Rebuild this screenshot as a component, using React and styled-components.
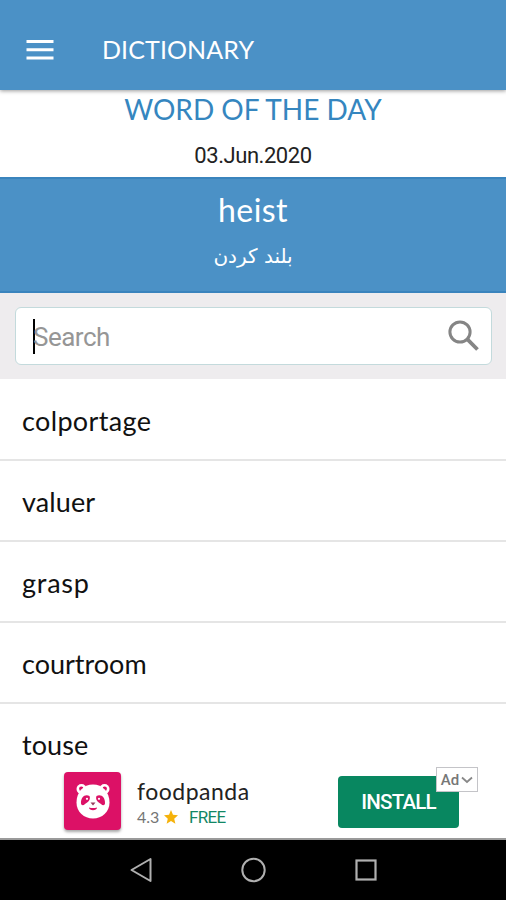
import React from "react";
import styled, { createGlobalStyle } from "styled-components";

const GlobalStyle = createGlobalStyle`
  * { box-sizing: border-box; }
  body { margin: 0; background: #fff; }
`;

const Screen = styled.div`
  width: 506px;
  height: 900px;
  display: flex;
  flex-direction: column;
  overflow: hidden;
  background: #fff;
  font-family: Lato, "Open Sans", sans-serif;
`;

const AppBar = styled.header`
  position: relative;
  height: 90px;
  flex: none;
  display: flex;
  align-items: center;
  gap: 48px;
  padding: 9px 26px 0;
  background: #4b91c6;
  box-shadow: 0 1px 4px rgba(0, 0, 0, 0.4);
  color: #fff;
`;

const Label = styled.span`
  display: block;
  margin: 0;
  white-space: nowrap;
  font-family: ${(p) => p.$font || "inherit"};
  font-size: ${(p) => p.$size}px;
  line-height: ${(p) => p.$line || p.$size + 6}px;
  letter-spacing: ${(p) => p.$spacing || 0}px;
  font-weight: ${(p) => p.$weight || 400};
  color: ${(p) => p.$color || "inherit"};
`;

const DayHeading = styled.section`
  height: 87px;
  flex: none;
  display: flex;
  flex-direction: column;
  align-items: center;
  padding-top: 4px;
  gap: 14px;
`;

const WordPanel = styled.section`
  height: 116px;
  flex: none;
  display: flex;
  flex-direction: column;
  align-items: center;
  padding-top: 13px;
  gap: 11px;
  background: #4b91c6;
  border-top: 2px solid #3a84bd;
  border-bottom: 2px solid #3a84bd;
  color: #fff;
`;

const SearchArea = styled.section`
  height: 86px;
  flex: none;
  padding: 14px 14px 14px 15px;
  background: #eeecee;
`;

const SearchBox = styled.div`
  height: 58px;
  display: flex;
  align-items: center;
  padding: 0 11px 0 17px;
  background: #fff;
  border: 1px solid #c3dadc;
  border-radius: 6px;
`;

const Caret = styled.span`
  width: 2px;
  height: 35px;
  margin-right: -2px;
  background: #000;
`;

const Placeholder = styled(Label)`
  flex: 1;
  padding-top: 2px;
`;

const WordList = styled.ul`
  margin: 0;
  padding: 1px 0 0;
  list-style: none;
  height: 389px;
  flex: none;
  overflow: hidden;
`;

const WordRow = styled.li`
  height: 81px;
  padding: 24px 22px 0;
  border-bottom: 2px solid #e5e5e5;
  color: #111;
  &:last-child { border-bottom: 0; }
`;

const AdBanner = styled.aside`
  position: relative;
  height: 72px;
  flex: none;
  display: flex;
  align-items: flex-start;
  padding: 4px 47px 0 64px;
  background: #fff;
  border-bottom: 2px solid #9a9a9a;
`;

const AppIcon = styled.div`
  width: 57px;
  height: 58px;
  display: grid;
  place-items: center;
  border-radius: 4px;
  background: #dc1166;
  box-shadow: 0 2px 3px rgba(0, 0, 0, 0.35);
`;

const AdInfo = styled.div`
  flex: 1;
  padding: 5px 0 0 16px;
`;

const AdMeta = styled.div`
  display: grid;
  grid-template-columns: 27px 25px auto;
  align-items: center;
`;

const InstallButton = styled.button`
  width: 121px;
  height: 52px;
  margin-top: 4px;
  padding: 0;
  border: 0;
  border-radius: 4px;
  background: #088760;
  color: #fff;
  display: grid;
  place-items: center;
`;

const AdBadge = styled.div`
  position: absolute;
  top: -1px;
  left: 436px;
  width: 42px;
  height: 25px;
  display: flex;
  align-items: center;
  justify-content: center;
  gap: 2px;
  background: #fff;
  border: 1px solid #c4c4c8;
`;

const NavBar = styled.nav`
  height: 60px;
  flex: none;
  display: grid;
  grid-template-columns: repeat(3, 112.5px);
  justify-content: center;
  justify-items: center;
  align-items: center;
  background: #000;
`;

const ROBOTO = "Roboto, sans-serif";

const words = [
  { text: "colportage", spacing: 0.35 },
  { text: "valuer", spacing: 0.1 },
  { text: "grasp", spacing: 0.75 },
  { text: "courtroom", spacing: 0 },
  { text: "touse", spacing: 0.1 },
];

function MenuIcon() {
  return (
    <svg width="28" height="20" viewBox="0 0 28 20" fill="#fff">
      <path d="M.5 0h27v3H.5zM.5 8.2h27v3H.5zM.5 16.400h27v3H.5z" />
    </svg>
  );
}

function SearchIcon() {
  return (
    <svg width="32" height="32" viewBox="0 0 32 32" fill="none" stroke="#858585">
      <circle cx="12" cy="12" r="10.1" strokeWidth="3" />
      <path d="M19.2 19.2 29.500 29.500" strokeWidth="3.800" />
    </svg>
  );
}

function Panda() {
  return (
    <svg width="36" height="38" viewBox="0 0 36 38">
      <circle cx="6.5" cy="7" r="5" fill="#fff" />
      <circle cx="29.5" cy="7" r="5" fill="#fff" />
      <circle cx="6.3" cy="6.7" r="2.2" fill="#dc1166" />
      <circle cx="29.7" cy="6.7" r="2.2" fill="#dc1166" />
      <path d="M18 2.5C27.5 2.5 34.5 10 34.5 20.5C34.5 30 27 36.5 18 36.5S1.5 30 1.5 20.5C1.5 10 8.5 2.5 18 2.5Z" fill="#fff" />
      <path d="M14.5 14C10 11.5 5.500 15.500 6 21.500c.3 2.200 2.500 2.200 4 .5 3-1.500 6-4.500 4.500-8ZM21.500 14c4.500-2.500 9 1.500 8.500 7.500-.3 2.200-2.500 2.200-4 .5-3-1.500-6-4.500-4.500-8Z" fill="#dc1166" />
      <circle cx="12" cy="16.800" r="1.100" fill="#fff" />
      <circle cx="24" cy="16.800" r="1.100" fill="#fff" />
      <path d="M15.500 20.500h5L18 23.500Z" fill="#963b5c" />
      <path d="M14 25.500q4 1 8 0c0 3.500-8 3.500-8 0Z" fill="#dc1166" />
    </svg>
  );
}

export default function App() {
  return (
    <Screen>
      <GlobalStyle />
      <AppBar>
        <MenuIcon />
        <Label as="h1" $size={25} $spacing={0.1}>DICTIONARY</Label>
      </AppBar>
      <DayHeading>
        <Label as="h2" $size={28} $line={31} $color="#3586bf">WORD OF THE DAY</Label>
        <Label $font={ROBOTO} $size={22} $line={34} $color="#222" $spacing={-0.45}>03.Jun.2020</Label>
      </DayHeading>
      <WordPanel>
        <Label $size={32} $line={36} $spacing={0.4}>heist</Label>
        <Label $font={'"DejaVu Sans", sans-serif'} $size={20} $line={34} dir="rtl" lang="fa">بلند کردن</Label>
      </WordPanel>
      <SearchArea>
        <SearchBox>
          <Caret />
          <Placeholder $font={ROBOTO} $size={26} $color="#969696" $spacing={-0.5}>Search</Placeholder>
          <SearchIcon />
        </SearchBox>
      </SearchArea>
      <WordList>
        {words.map((w) => (
          <WordRow key={w.text}>
            <Label $size={27} $line={34} $spacing={w.spacing}>{w.text}</Label>
          </WordRow>
        ))}
      </WordList>
      <AdBanner>
        <AppIcon><Panda /></AppIcon>
        <AdInfo>
          <Label $size={23} $line={28} $color="#222" $spacing={0.5}>foodpanda</Label>
          <AdMeta>
            <Label $size={16} $line={24} $color="#757575">4.3</Label>
            <svg width="14" height="14" viewBox="0 0 24 24" fill="#f5b20b">
              <path d="m12 0 3.400 8L24 9l-6.500 5.800L19.500 23.500 12 19l-7.500 4.500 2-8.700L0 9l8.600-1Z" />
            </svg>
            <Label $font={ROBOTO} $size={17} $line={24} $spacing={-0.7} $color="#128765">FREE</Label>
          </AdMeta>
        </AdInfo>
        <InstallButton>
          <Label $font={ROBOTO} $size={20.5} $weight={500} $spacing={-0.8}>INSTALL</Label>
        </InstallButton>
        <AdBadge>
          <Label $font={ROBOTO} $size={15} $weight={500} $color="#777" $line={20}>Ad</Label>
          <svg width="12" height="8" viewBox="0 0 12 8" fill="none" stroke="#888" strokeWidth="1.800">
            <path d="m1 1.500 5 4.500 5-4.500" />
          </svg>
        </AdBadge>
      </AdBanner>
      <NavBar>
        <svg width="24" height="26" viewBox="0 0 24 26" fill="none" stroke="#b0b0b0" strokeWidth="2" strokeLinejoin="round">
          <path d="M21.500 2v22L2.500 13Z" />
        </svg>
        <svg width="26" height="26" viewBox="0 0 26 26" fill="none" stroke="#b0b0b0" strokeWidth="2">
          <circle cx="13.500" cy="13" r="11.200" />
        </svg>
        <svg width="24" height="24" viewBox="0 0 24 24" fill="none" stroke="#b0b0b0" strokeWidth="2.200">
          <rect x="2.500" y="2.500" width="19" height="19" />
        </svg>
      </NavBar>
    </Screen>
  );
}
